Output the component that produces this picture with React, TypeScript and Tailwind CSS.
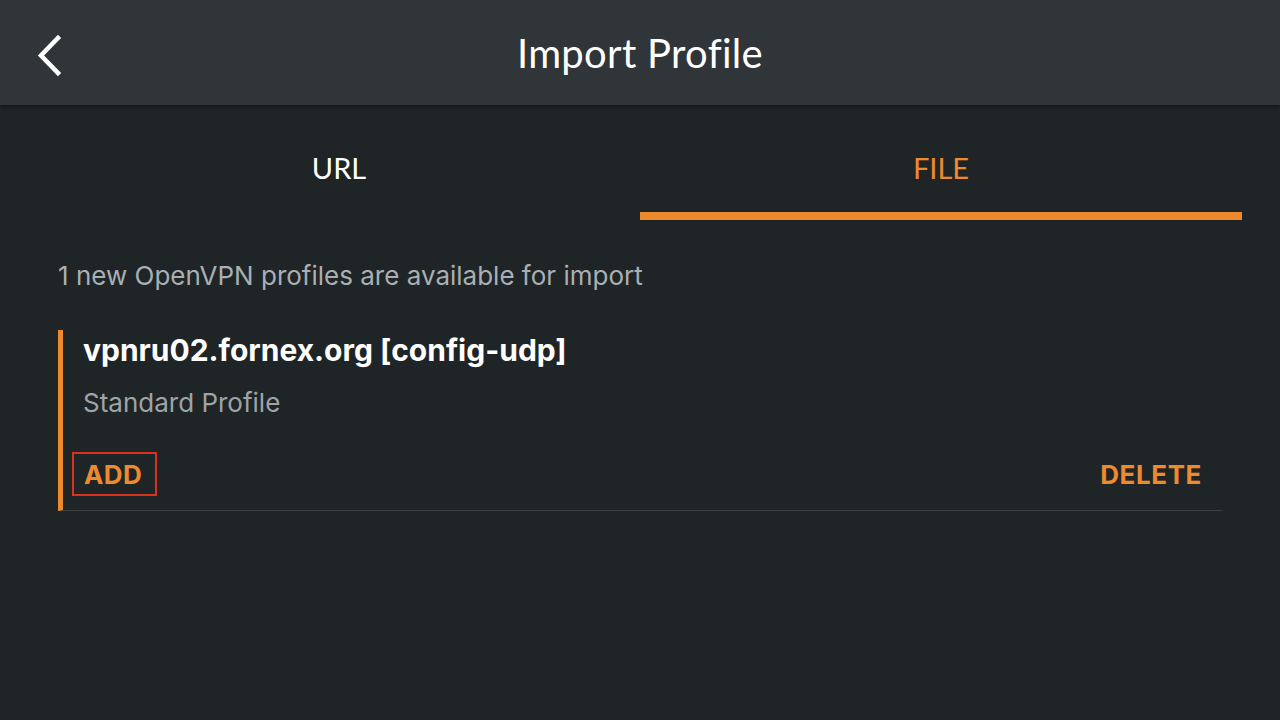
import React, { useState } from 'react';

export default function App() {
  const [tab, setTab] = useState<'url' | 'file'>('file');

  return (
    <div className="w-[1280px] h-[720px] bg-[#1f2427] flex flex-col overflow-hidden" style={{ fontFamily: 'Inter, Roboto, "Liberation Sans", sans-serif' }}>
      {/* Header */}
      <div className="h-[105px] bg-[#2f3538] flex items-center relative shrink-0 shadow-[0_2px_3px_rgba(0,0,0,0.35)]">
        <button className="absolute left-[33px] top-[33px] w-[32px] h-[46px] flex items-center justify-center">
          <svg width="30" height="44" viewBox="0 0 30 44" fill="none">
            <path d="M24 4 L7 21.5 L24 39" stroke="white" strokeWidth="4.5" strokeLinecap="square" />
          </svg>
        </button>
        <h1 className="w-full text-center text-white text-[40px] tracking-[0.3px]" style={{ fontFamily: 'Lato, "Noto Sans", sans-serif' }}>
          Import Profile
        </h1>
      </div>

      {/* Tabs */}
      <div className="flex mx-[38px] mt-[38px]" style={{ fontFamily: 'Lato, "Noto Sans", sans-serif' }}>
        <button onClick={() => setTab('url')} className="flex-1 flex flex-col items-center">
          <span className={`text-[29px] leading-[50px] ${tab === 'url' ? 'text-[#ee8a2e]' : 'text-white'}`}>URL</span>
          <span className={`mt-[19px] h-[8px] w-full ${tab === 'url' ? 'bg-[#ee8a2e]' : 'bg-transparent'}`} />
        </button>
        <button onClick={() => setTab('file')} className="flex-1 flex flex-col items-center">
          <span className={`text-[29px] leading-[50px] ${tab === 'file' ? 'text-[#ee8a2e]' : 'text-white'}`}>FILE</span>
          <span className={`mt-[19px] h-[8px] w-full ${tab === 'file' ? 'bg-[#ee8a2e]' : 'bg-transparent'}`} />
        </button>
      </div>

      {/* Content */}
      <div className="px-[58px] pt-[40px]">
        <p className="text-[26px] leading-[32px] text-[#a9afb2]">1 new OpenVPN profiles are available for import</p>

        <div className="mt-[38px] w-[1164px] border-l-[5px] border-[#ee8a2e] border-b border-b-[#3a3f43] pl-[20px] pr-[20px] pt-[2px] pb-[14px]">
          <div className="text-[30px] leading-[36px] font-bold text-white">
            vpnru02.fornex.org [config-udp]
          </div>
          <div className="mt-[19px] text-[26px] leading-[32px] text-[#9ea4a7]">Standard Profile</div>
          <div className="mt-[33px] flex justify-between items-center">
            <button className="-ml-[11px] w-[85px] pl-[10px] text-left h-[44px] border-2 border-[#d9321f] text-[26px] tracking-[0.4px] font-bold text-[#ee8a2e]">ADD</button>
            <button className="text-[26px] tracking-[0.6px] font-bold text-[#ee8a2e]">DELETE</button>
          </div>
        </div>
      </div>
    </div>
  );
}
